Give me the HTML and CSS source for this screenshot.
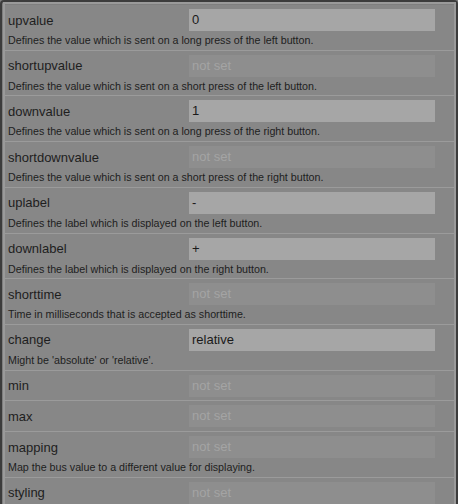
FILE: index.html
```html
<!DOCTYPE html>
<html>
<head>
<meta charset="utf-8">
<link rel="stylesheet" href="styles.css">
</head>
<body>
<div class="frame">
  <div class="inner">
    <div class="row">
      <div class="line"><span class="label">upvalue</span><div class="input filled">0</div></div>
      <div class="desc">Defines the value which is sent on a long press of the left button.</div>
    </div>
    <div class="row">
      <div class="line"><span class="label">shortupvalue</span><div class="input empty">not set</div></div>
      <div class="desc">Defines the value which is sent on a short press of the left button.</div>
    </div>
    <div class="row">
      <div class="line"><span class="label">downvalue</span><div class="input filled">1</div></div>
      <div class="desc">Defines the value which is sent on a long press of the right button.</div>
    </div>
    <div class="row">
      <div class="line"><span class="label">shortdownvalue</span><div class="input empty">not set</div></div>
      <div class="desc">Defines the value which is sent on a short press of the right button.</div>
    </div>
    <div class="row">
      <div class="line"><span class="label">uplabel</span><div class="input filled">-</div></div>
      <div class="desc">Defines the label which is displayed on the left button.</div>
    </div>
    <div class="row">
      <div class="line"><span class="label">downlabel</span><div class="input filled">+</div></div>
      <div class="desc">Defines the label which is displayed on the right button.</div>
    </div>
    <div class="row">
      <div class="line"><span class="label">shorttime</span><div class="input empty">not set</div></div>
      <div class="desc">Time in milliseconds that is accepted as shorttime.</div>
    </div>
    <div class="row">
      <div class="line"><span class="label">change</span><div class="input filled">relative</div></div>
      <div class="desc">Might be 'absolute' or 'relative'.</div>
    </div>
    <div class="row nodesc">
      <div class="line"><span class="label">min</span><div class="input empty">not set</div></div>
    </div>
    <div class="row nodesc">
      <div class="line"><span class="label">max</span><div class="input empty">not set</div></div>
    </div>
    <div class="row">
      <div class="line"><span class="label">mapping</span><div class="input empty">not set</div></div>
      <div class="desc">Map the bus value to a different value for displaying.</div>
    </div>
    <div class="row nodesc">
      <div class="line"><span class="label">styling</span><div class="input empty">not set</div></div>
    </div>
  </div>
</div>
</body>
</html>
```

FILE: styles.css
```css
html, body {
  margin: 0;
  padding: 0;
  height: 504px;
  overflow: hidden;
  background: #7e7e7e;
  font-family: "Liberation Sans", Arial, sans-serif;
  color: #1e1e1e;
}
.frame {
  border: 2px solid #3c3c3c;
  border-bottom: none;
  border-radius: 4px 4px 0 0;
  padding: 0 0 0 1px;
  height: 520px;
  box-sizing: border-box;
}
.inner {
  border: 2px solid #9a9a9a;
  border-bottom: none;
  background: #7f7f7f;
  height: 100%;
  box-sizing: border-box;
  padding-top: 1px;
}
.row {
  background: #878787;
  border-bottom: 1px solid #9b9b9b;
  padding-top: 4px;
}
.row.nodesc {
  padding-bottom: 3.7px;
}
.line {
  display: flex;
  align-items: center;
  height: 22px;
}
.label {
  width: 181px;
  padding-left: 3px;
  font-size: 13px;
  flex: none;
}
.input {
  width: 243px;
  height: 22px;
  line-height: 22px;
  padding-left: 3px;
  font-size: 13px;
  box-sizing: content-box;
}
.input.filled {
  background: #a6a6a6;
  color: #1a1a1a;
}
.input.empty {
  background: #8e8e8e;
  color: #a4a4a4;
}
.desc {
  font-size: 10.7px;
  line-height: 18.7px;
  padding-left: 3px;
}
```
